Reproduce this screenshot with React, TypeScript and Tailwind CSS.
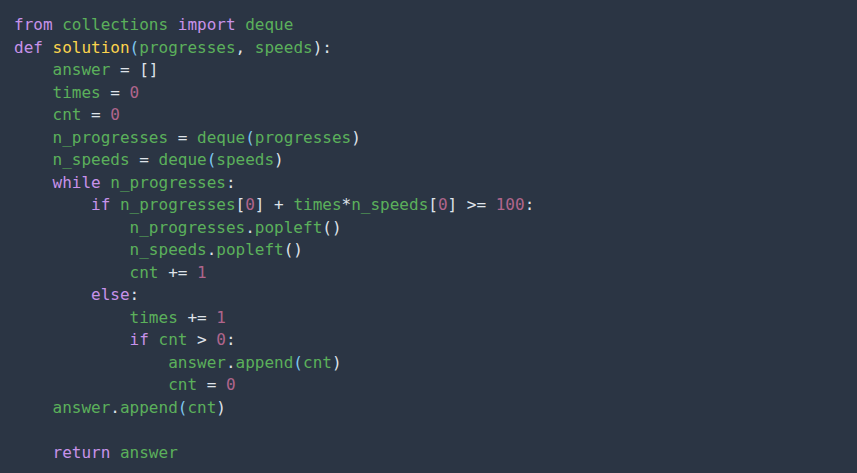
import React from "react";

type Tok = [string, string];

const K = "text-[#c792ea]";
const G = "text-[#5bb05b]";
const F = "text-[#fcd34d]";
const N = "text-[#b0658c]";
const P = "text-[#dfe3ea]";
const B = "text-[#7fc8f0]";

const lines: Tok[][] = [
  [["from", K], [" ", P], ["collections", G], [" ", P], ["import", K], [" ", P], ["deque", G]],
  [["def", K], [" ", P], ["solution", F], ["(", B], ["progresses", G], [", ", P], ["speeds", G], [")", P], [":", P]],
  [["    ", P], ["answer", G], [" = ", P], ["[]", P]],
  [["    ", P], ["times", G], [" = ", P], ["0", N]],
  [["    ", P], ["cnt", G], [" = ", P], ["0", N]],
  [["    ", P], ["n_progresses", G], [" = ", P], ["deque", G], ["(", B], ["progresses", G], [")", P]],
  [["    ", P], ["n_speeds", G], [" = ", P], ["deque", G], ["(", B], ["speeds", G], [")", P]],
  [["    ", P], ["while", K], [" ", P], ["n_progresses", G], [":", P]],
  [["        ", P], ["if", K], [" ", P], ["n_progresses", G], ["[", P], ["0", N], ["]", P], [" + ", P], ["times", G], ["*", P], ["n_speeds", G], ["[", P], ["0", N], ["]", P], [" >= ", P], ["100", N], [":", P]],
  [["            ", P], ["n_progresses", G], [".", P], ["popleft", G], ["()", P]],
  [["            ", P], ["n_speeds", G], [".", P], ["popleft", G], ["()", P]],
  [["            ", P], ["cnt", G], [" += ", P], ["1", N]],
  [["        ", P], ["else", K], [":", P]],
  [["            ", P], ["times", G], [" += ", P], ["1", N]],
  [["            ", P], ["if", K], [" ", P], ["cnt", G], [" > ", P], ["0", N], [":", P]],
  [["                ", P], ["answer", G], [".", P], ["append", G], ["(", B], ["cnt", G], [")", P]],
  [["                ", P], ["cnt", G], [" = ", P], ["0", N]],
  [["    ", P], ["answer", G], [".", P], ["append", G], ["(", B], ["cnt", G], [")", P]],
  [],
  [["    ", P], ["return", K], [" ", P], ["answer", G]],
];

export default function App() {
  return (
    <div className="w-[857px] h-[473px] bg-[#2b3544] overflow-hidden">
      <pre className="m-0 pt-[14px] pl-[14px] font-['DejaVu_Sans_Mono',monospace] text-[16px] leading-[22.5px] whitespace-pre">
        {lines.map((l, i) => (
          <div key={i} className="h-[22.5px]">
            {l.map((t, j) => (
              <span key={j} className={t[1]}>
                {t[0]}
              </span>
            ))}
          </div>
        ))}
      </pre>
    </div>
  );
}
